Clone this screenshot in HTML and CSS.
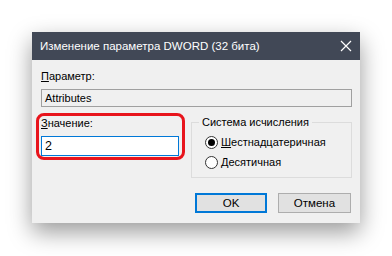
FILE: index.html
```html
<!DOCTYPE html>
<html>
<head>
<meta charset="utf-8">
<link rel="stylesheet" href="styles.css">
</head>
<body>
<div class="dialog">
  <div class="titlebar">
    <span class="title">Изменение параметра DWORD (32 бита)</span>
    <svg class="close" width="12" height="12" viewBox="0 0 12 12"><path d="M1 1L11 11M11 1L1 11" stroke="#fff" stroke-width="1.2" fill="none"/></svg>
  </div>
  <div class="body">
    <div class="label"><u>П</u>араметр:</div>
    <div class="field readonly">Attributes</div>
    <div class="row">
      <div class="leftcol">
        <div class="label value-label"><u>З</u>начение:</div>
        <div class="field input">2</div>
        <div class="highlight"></div>
      </div>
      <fieldset class="group">
        <legend>Система исчисления</legend>
        <div class="radio"><span class="dot checked"></span><span><u>Ш</u>естнадцатеричная</span></div>
        <div class="radio"><span class="dot"></span><span><u>Д</u>есятичная</span></div>
      </fieldset>
    </div>
    <div class="buttons">
      <div class="btn default">OK</div>
      <div class="btn">Отмена</div>
    </div>
  </div>
</div>
</body>
</html>
```
FILE: styles.css
```css
html, body {
  margin: 0;
  padding: 0;
  background: #ffffff;
}
body {
  width: 392px;
  height: 256px;
  overflow: hidden;
  font-family: "Liberation Sans", "Noto Sans", sans-serif;
  font-size: 11px;
  color: #000;
}
.dialog {
  margin: 32px 0 0 32px;
  width: 328px;
  height: 191px;
  background: #f0f0f0;
  box-shadow: 0 9px 22px rgba(0,0,0,0.4);
  display: flex;
  flex-direction: column;
}
.titlebar {
  height: 28px;
  background: #414856;
  display: flex;
  align-items: center;
  justify-content: space-between;
  padding: 0 8px 0 8px;
}
.title {
  color: #ffffff;
  font-size: 11.5px;
}
.close {
  display: block;
}
.body {
  padding: 8px 8px 0 9px;
  display: flex;
  flex-direction: column;
}
.label {
  height: 16px;
  line-height: 16px;
  color: #000;
}
.field {
  box-sizing: border-box;
  height: 18px;
  line-height: 16px;
  padding-left: 3px;
}
.readonly {
  margin-top: 5px;
  border: 1px solid #a0a0a0;
  background: #f0f0f0;
}
.row {
  display: flex;
  margin-top: 8px;
}
.leftcol {
  position: relative;
  width: 138px;
}
.input {
  margin-top: 5px;
  height: 20px;
  line-height: 18px;
  border: 1px solid #0078d7;
  background: #ffffff;
  font-size: 12.5px;
}
.highlight {
  position: absolute;
  left: -5px;
  top: -2px;
  width: 149px;
  height: 47px;
  box-sizing: border-box;
  border: 3.5px solid #e8141c;
  border-radius: 8px;
}
.group {
  margin: 0 0 0 12px;
  padding: 3px 0 0 13px;
  width: 161px;
  height: 63px;
  box-sizing: border-box;
  border: 1px solid #dcdcdc;
  border-radius: 0;
}
.group legend {
  padding: 0 3px;
  margin-left: -6px;
  line-height: 14px;
}
.radio {
  display: flex;
  align-items: center;
  gap: 3px;
  height: 20px;
}
.dot {
  width: 11px;
  height: 11px;
  border: 1px solid #333;
  border-radius: 50%;
  background: #fff;
  display: flex;
  align-items: center;
  justify-content: center;
}
.dot.checked::after {
  content: "";
  width: 7px;
  height: 7px;
  border-radius: 50%;
  background: #000;
}
.buttons {
  display: flex;
  justify-content: flex-end;
  gap: 11px;
  margin-top: 15px;
  padding-right: 1px;
}
.btn {
  box-sizing: border-box;
  width: 73px;
  height: 20px;
  line-height: 18px;
  text-align: center;
  border: 1px solid #adadad;
  background: #e1e1e1;
  font-size: 11.5px;
}
.btn.default {
  width: 72px;
  border: 2px solid #0078d7;
  line-height: 16px;
}
```
